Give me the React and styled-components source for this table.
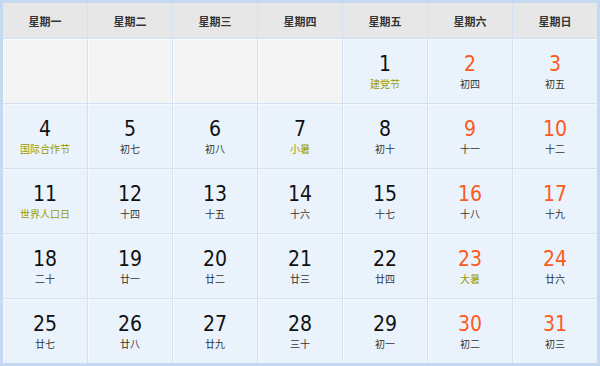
import React from 'react';
import styled, { createGlobalStyle } from 'styled-components';

const GlobalStyle = createGlobalStyle`
  html, body {
    margin: 0;
    padding: 0;
    background: #ffffff;
  }
`;

const weekDays = ['星期一', '星期二', '星期三', '星期四', '星期五', '星期六', '星期日'];

// 2021年7月
const days = [
  null, null, null, null,
  { d: 1, l: '建党节', fest: true },
  { d: 2, l: '初四' },
  { d: 3, l: '初五' },
  { d: 4, l: '国际合作节', fest: true },
  { d: 5, l: '初七' },
  { d: 6, l: '初八' },
  { d: 7, l: '小暑', fest: true },
  { d: 8, l: '初十' },
  { d: 9, l: '十一' },
  { d: 10, l: '十二' },
  { d: 11, l: '世界人口日', fest: true },
  { d: 12, l: '十四' },
  { d: 13, l: '十五' },
  { d: 14, l: '十六' },
  { d: 15, l: '十七' },
  { d: 16, l: '十八' },
  { d: 17, l: '十九' },
  { d: 18, l: '二十' },
  { d: 19, l: '廿一' },
  { d: 20, l: '廿二' },
  { d: 21, l: '廿三' },
  { d: 22, l: '廿四' },
  { d: 23, l: '大暑', fest: true },
  { d: 24, l: '廿六' },
  { d: 25, l: '廿七' },
  { d: 26, l: '廿八' },
  { d: 27, l: '廿九' },
  { d: 28, l: '三十' },
  { d: 29, l: '初一' },
  { d: 30, l: '初二' },
  { d: 31, l: '初三' },
];

const App = () => {
  return (
    <>
      <GlobalStyle />
      <Calendar>
        {weekDays.map((w) => (
          <HeadCell key={w}>{w}</HeadCell>
        ))}
        {days.map((day, i) => {
          if (!day) return <EmptyCell key={'e' + i} />;
          const weekend = i % 7 >= 5;
          return (
            <DayCell key={day.d}>
              <DayNum $weekend={weekend}>{day.d}</DayNum>
              <Lunar $fest={day.fest}>{day.l}</Lunar>
            </DayCell>
          );
        })}
      </Calendar>
    </>
  );
};

const Calendar = styled.div`
  width: 600px;
  height: 366px;
  box-sizing: border-box;
  border: 3px solid #c6d9f3;
  background: #d4e1f1;
  display: grid;
  grid-template-columns: repeat(7, 1fr);
  grid-template-rows: 35px repeat(5, 64px);
  gap: 1px;
  font-family: "Noto Sans CJK SC", sans-serif;
`;

const HeadCell = styled.div`
  background: #e7e7e7;
  display: flex;
  align-items: center;
  justify-content: center;
  font-size: 11px;
  font-weight: bold;
  color: #333333;
  box-shadow: inset 0 -1px 0 #dfe6ee;
`;

const EmptyCell = styled.div`
  background: #f4f4f4;
  box-shadow: inset 1px 1px 0 #fbfbfb;
`;

const DayCell = styled.div`
  background: #eaf3fb;
  box-shadow: inset 1px 1px 0 #f4f9fe;
  display: flex;
  flex-direction: column;
  align-items: center;
  padding-top: 13px;
  box-sizing: border-box;
`;

const DayNum = styled.div`
  font-family: "DejaVu Sans Condensed", "Liberation Sans", sans-serif;
  font-stretch: condensed;
  font-size: 21px;
  line-height: 24px;
  color: ${(p) => (p.$weekend ? '#fa5a1e' : '#111111')};
`;

const Lunar = styled.div`
  margin-top: 1px;
  font-size: 10px;
  line-height: 14px;
  color: ${(p) => (p.$fest ? '#999a00' : '#333333')};
`;

export default App;
